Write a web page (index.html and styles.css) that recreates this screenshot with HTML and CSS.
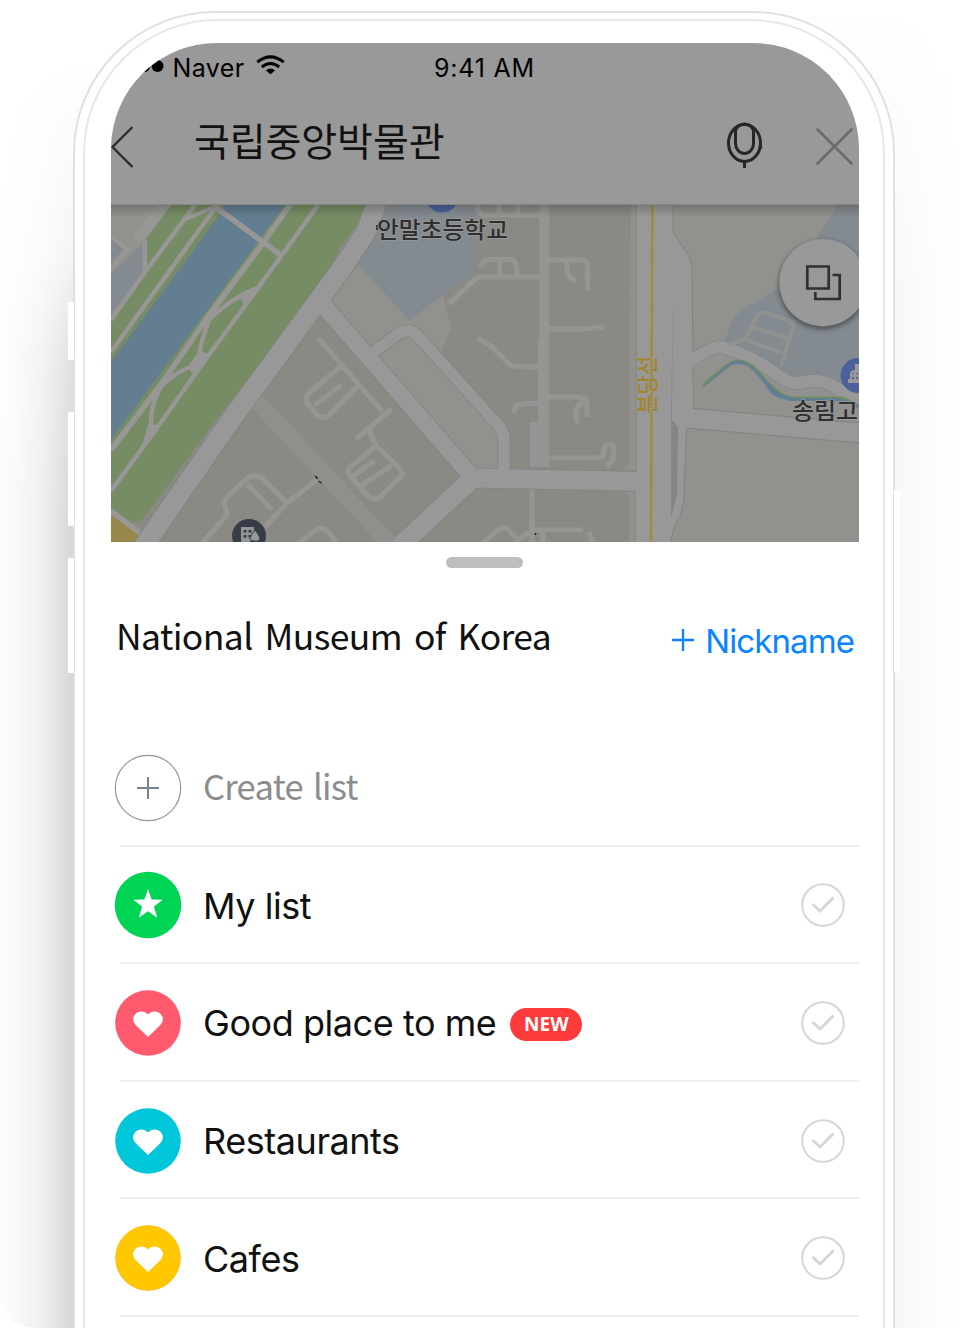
FILE: index.html
```html
<!DOCTYPE html>
<html lang="en">
<head>
<meta charset="utf-8">
<title>Save place</title>
<link rel="stylesheet" href="styles.css">
</head>
<body>
<div class="stage">
<div class="shade shade-left"></div>
<div class="shade shade-right"></div>
<div class="phone">
<i class="key key-mute"></i><i class="key key-up"></i><i class="key key-down"></i><i class="key key-power"></i>
<div class="bezel">
<main class="screen">
  <header class="top">
    <div class="status">
      <svg class="signal" width="30" height="14" viewBox="0 0 30 14"><circle cx="9" cy="7" r="6.200"/><circle cx="22.500" cy="7" r="6"/></svg>
      <span class="carrier">Naver</span>
      <svg class="wifi" width="29" height="20" viewBox="0 0 29 20"><g fill="none" stroke="#000" stroke-width="3"><path d="M1.2 7.2Q14.5-3.4 27.8 7.2"/><path d="M5.8 12Q14.500 5 23.200 12"/></g><path d="M14.500 19.300L10 15.400Q14.500 11.600 19 15.400Z"/></svg>
      <span class="time">9:41 AM</span>
      <svg class="battery" width="14" height="20" viewBox="0 0 14 20"><path d="M1.500 11Q2.500 16 7 16.300" fill="none" stroke="#000" stroke-width="2.200"/></svg>
    </div>
    <div class="search">
      <svg class="back" width="24" height="44" viewBox="0 0 24 44"><path d="M21.500 2L1.500 22L21.500 42" fill="none" stroke="#2a2d35" stroke-width="2.400"/></svg>
      <h1 class="query" lang="ko">국립중앙박물관</h1>
      <svg class="mic" width="37" height="48" viewBox="0 0 37 48"><g fill="none" stroke="#262626" stroke-width="3"><ellipse cx="18.500" cy="21" rx="16" ry="18.500"/><path d="M9.500 10a9 8 0 0 1 18 0v11.500a9 10 0 0 1-18 0z"/><path d="M18.500 39.500v6.500"/></g><circle cx="34.500" cy="25.500" r="1.800" fill="#262626"/></svg>
      <svg class="close" width="37" height="37" viewBox="0 0 37 37"><path d="M1.500 1.500l34 34M35.500 1.500l-34 34" stroke="#6a6b6d" stroke-width="2.700" stroke-linecap="round"/></svg>
    </div>
  </header>
  <svg class="map" width="748" height="337" viewBox="111 205 748 337" lang="ko">
    <defs>
      <linearGradient id="fade" x1="0" y1="0" x2="0" y2="1"><stop offset="0" stop-opacity=".2"/><stop offset="1" stop-opacity="0"/></linearGradient>
      <filter id="soft" x="-30%" y="-30%" width="160%" height="160%"><feGaussianBlur stdDeviation="2.500"/></filter>
    </defs>
    <rect x="111" y="205" width="748" height="337" fill="#8a8984"/>
    <path fill="#91918e" d="M111 205H172L145 240L111 300ZM409 320L443 295L451 328L441 353L504 430V470H473L318 305L357 263ZM631 205H640V542H629V495L624 492H640V470H620L629 464ZM670 205H859V542H670Z"/>
    <path fill="#8f8f8c" d="M256 396L268 400L412 556H390L252 408Z"/>
    <path fill="#848b90" d="M388 205H476V272L409 320L357 263L372 242ZM142 245L111 273V322L145 272ZM111 232L125 248L111 262ZM838 205H859V398L835 384L798 382L765 364L722 346L733 320Q738 311 754 303L779 288L817 238Z"/>
    <path fill="#768c64" d="M171 205L147 238V272L111 322V510L131 523L143 519L216 420L270 350L313 300L340 248L356 226L365 205Z"/>
    <path fill="#637e91" d="M111 362L223 210L225 205H285L111 440Z"/>
    <path fill="#97874a" d="M111 515L148 542H111Z"/>
    <g fill="none" stroke="#989796" stroke-width="4.500" stroke-linejoin="round">
      <path d="M111 320L145 272L195 205M145 240V272M111 352L215 208M185 219L215 207"/>
      <path stroke-width="5.500" d="M213 205L263 242L282 256M290 205L263 243L207 318L162 383L111 450M111 511L149 540"/>
      <path d="M318 205L282 255L247 303L203 363L157 428L111 491M258 288Q232 297 209 320M209 320Q202 338 199 355L190 367Q172 374 160 388M160 388Q151 404 151 422L145 444M111 268L128 250L111 236"/>
      <path stroke-width="11" stroke-linecap="round" d="M166 203L140 236"/>
    </g>
    <path fill="#989796" d="M258 287L241 298L244 307L249 303ZM200 350L189 369L195 377L209 355ZM151 424L145 444L160 426Z"/>
    <g fill="none" stroke="#959594" stroke-width="5.200" stroke-linejoin="round">
      <path d="M477 205Q478 215 486 215H540M499 205V215M518 205V215M480 267Q484 259.500 490 259.500H512Q517 261 517 276M499.500 260V276M540 277H485Q478 276 472 282L449 304"/>
      <path d="M549 260H582Q587 260 587.500 266V290M567 262V270Q569 278 576 281M549 329H582L604 327M478 338L492 347L510 365Q512 367 539 367M514 413Q514 404 522 404L539 403M549 397H580Q587 398 587 405V417M585 401Q571 408 578 423M549 458H598L603 456L605 446Q613 441 614 449L613 460L606 467"/>
      <path d="M532 488V542M532 530H583M484 542L499 529Q505 525 510 532L518 540L533 530M543 530V542M589 532L593 542"/>
      <path d="M318 338L383 412M392 409L356 439M368 428L376 446L350 467Q346 471 350 476L368 496Q375 502 380 497L402 476Q403 472 400 469L376 446M352 477L374 461M362 485L392 465M340 367L308 394Q304 400 308 404L317 415Q323 420 329 415L358 386M315 405L341 385"/>
      <path d="M228 516L224 503Q224 498 248 478Q257 473 263 479L287 503L318 479M287 503L265 527M227 515L203 542M247 484L272 510M300 542L316 530Q322 526 328 532L336 542"/>
    </g>
    <g fill="none" stroke="#828281" stroke-linejoin="round">
      <path stroke-width="21" d="M377 203L366 232L345 264L318 301L233 417L143 547"/>
      <path stroke-width="18" d="M318 299L473 478"/><path stroke-width="20.500" d="M400 546L473 478L600 480.500L640 481.500"/>
      <path stroke-width="13" d="M370 355L398 334Q408 327 416 334L498 425Q504 432 504 440V472"/>
    </g>
    <g fill="none" stroke="#989898" stroke-linejoin="round">
      <path stroke-width="19.500" d="M377 203L366 232L345 264L318 301L233 417L143 547"/>
      <path stroke-width="16.500" d="M318 299L473 478"/><path stroke-width="19" d="M400 546L473 478L600 480.500L640 481.500"/>
      <path stroke-width="11.500" d="M370 355L398 334Q408 327 416 334L498 425Q504 432 504 440V472"/>
    </g>
    <path fill="#959595" d="M539.500 205H549V467H530V422H538V340H539.500Z"/>
    <path fill="none" stroke="#858585" stroke-width="13.500" d="M690 361Q712 346 720 346.500Q748 354 772 371Q790 385 800 383Q818 377 835 387L862 403"/>
    <path fill="#989898" stroke="#828282" stroke-width="1" d="M636 204H673V233L687 253Q691 258 692 270L693.500 408.500L860 423V443L686.500 428L684 495Q683 509 680 516Q672 529 671 543H635V492H632V471.500H636Z"/>
    <path fill="#989898" d="M629 472.200H640V491H629Z"/>
    <path fill="none" stroke="#989898" stroke-width="12" d="M686 364Q712 346 720 346.500Q748 354 772 371Q790 385 800 383Q818 377 835 387L862 403"/>
    <path fill="#858584" d="M673 283L672 420L678 427L677 495L671 518L671 421Z"/>
    <path fill="none" stroke="#91918f" stroke-width="4" stroke-linejoin="round" d="M730 344L745 339L757 316Q760 312 767 313L790 321Q794 323 793 327L781 366M752 327L788 338M747 340L782 353"/>
    <path fill="none" stroke="#718e65" stroke-width="3" d="M703 386Q723 366 736 361Q747 360 757 370Q774 393 790 398H843L859 406"/>
    <path fill="#607f93" d="M701 388Q719 372 731 362Q740 358 748 364Q758 370 775 390Q784 397 796 398H840L859 406V408L840 401L790 401Q773 397 770 392Q756 371 747 366Q738 361 730 366L702 388Z"/>
    <path d="M652.300 205L651 542" stroke="#a48a35" stroke-width="2.400"/>
    <circle cx="442" cy="195.500" r="17" fill="#4b619b"/>
    <path d="M377 225v5M315.500 476l2 3M318.500 481l3 2M535.500 533v2" stroke="#222" stroke-width="1.500"/>
    <circle cx="858" cy="375.500" r="17.500" fill="#4b619b"/><path d="M848 383V379H850V373Q851 370 855 370V364H859V383Z" fill="#999"/><path d="M853 379v-2m0-3v-1m4 6v-2m0-3v-1" stroke="#4b619b" stroke-width="1.800"/>
    <circle cx="249" cy="536" r="17" fill="#363d48"/><path fill="#929496" d="M241 527H254V532L250 542H241Z"/><path fill="#363d48" d="M243.500 530h3v2.500h-3zm5 0h3v2.500h-3zm-5 5h3v2.500h-3zm5 0h3v2.500h-3z"/><path d="M255 530Q259 535 260 538Q259 542 255 541Q250 541 250 538Q251 535 255 530Z" fill="#999" stroke="#363d48"/>
    <g class="label">
      <text x="377" y="238" textLength="131" lengthAdjust="spacingAndGlyphs">안말초등학교</text>
      <text x="792" y="419" textLength="66" lengthAdjust="spacingAndGlyphs">송림고</text>
      <text class="line-name" transform="translate(655 414) rotate(-90)" textLength="58" lengthAdjust="spacingAndGlyphs">분당선</text>
    </g>
    <circle cx="823" cy="285" r="44.500" opacity=".4" filter="url(#soft)"/>
    <circle cx="823" cy="282.700" r="43.700" fill="#999"/>
    <path fill="none" stroke="#303030" stroke-width="2.700" d="M807.300 266.500H828.700V288.500H807.300ZM832.500 275H839.700V299H815.300V292"/>
    <rect x="111" y="205" width="748" height="12" fill="url(#fade)"/>
  </svg>
  <section class="sheet">
    <div class="grip"></div>
    <div class="heading">
      <h2 class="place">National Museum of Korea</h2>
      <a class="nick"><svg width="22" height="22" viewBox="0 0 22 22"><path d="M11 0v22M0 11h22" stroke="#0a84ff" stroke-width="2.300"/></svg><span>Nickname</span></a>
    </div>
    <ul class="lists">
      <li class="row create">
        <svg class="badge" width="68" height="68" viewBox="0 0 68 68"><circle cx="34" cy="34" r="32.700" fill="none" stroke="#8f95a1" stroke-width="1.200"/><path d="M34 23v22M23 34h22" stroke="#748291" stroke-width="2"/></svg>
        <span class="name">Create list</span>
      </li>
      <li class="row">
        <svg class="badge" width="68" height="68" viewBox="0 0 68 68"><circle cx="34" cy="34" r="33.300" fill="#00d455"/><path fill="#fff" d="M34 18L37.600 28.600L48.800 28.800L39.900 35.500L43.200 46.800L34 40.200L24.800 46.800L28.100 35.500L19.200 28.800L30.400 28.600Z"/></svg>
        <span class="name">My list</span>
        <svg class="check" width="44" height="44" viewBox="0 0 44 44"><circle cx="22" cy="22" r="20.800"/><path d="M11.500 21L19 28L32.500 14.500"/></svg>
      </li>
      <li class="row">
        <svg class="badge" width="68" height="68" viewBox="0 0 68 68"><circle cx="34" cy="34" r="32.800" fill="#ff5a6e"/><path class="heart" d="M34 48L22 36.500Q17 31 20.500 26C24 21.500 30.500 21.500 34 25.500C37.500 21.500 44 21.500 47.500 26Q51 31 46 36.500Z"/></svg>
        <span class="name">Good place to me</span><span class="new">NEW</span>
        <svg class="check" width="44" height="44" viewBox="0 0 44 44"><circle cx="22" cy="22" r="20.800"/><path d="M11.500 21L19 28L32.500 14.500"/></svg>
      </li>
      <li class="row">
        <svg class="badge" width="68" height="68" viewBox="0 0 68 68"><circle cx="34" cy="34" r="32.800" fill="#00c6da"/><path class="heart" d="M34 48L22 36.500Q17 31 20.500 26C24 21.500 30.500 21.500 34 25.500C37.500 21.500 44 21.500 47.500 26Q51 31 46 36.500Z"/></svg>
        <span class="name">Restaurants</span>
        <svg class="check" width="44" height="44" viewBox="0 0 44 44"><circle cx="22" cy="22" r="20.800"/><path d="M11.500 21L19 28L32.500 14.500"/></svg>
      </li>
      <li class="row">
        <svg class="badge" width="68" height="68" viewBox="0 0 68 68"><circle cx="34" cy="34" r="32.300" fill="#ffc800" stroke="#ffb90a"/><path class="heart" d="M34 48L22 36.500Q17 31 20.500 26C24 21.500 30.500 21.500 34 25.500C37.500 21.500 44 21.500 47.500 26Q51 31 46 36.500Z"/></svg>
        <span class="name">Cafes</span>
        <svg class="check" width="44" height="44" viewBox="0 0 44 44"><circle cx="22" cy="22" r="20.800"/><path d="M11.500 21L19 28L32.500 14.500"/></svg>
      </li>
    </ul>
  </section>
</main>
</div>
</div>
</div>
</body>
</html>
```
FILE: styles.css
```css
* { box-sizing: border-box; }
body { margin: 0; background: #fff; font-family: Inter, "Noto Sans CJK KR", sans-serif; color: #111; }
svg { display: block; flex: none; }
h1, h2, ul { margin: 0; padding: 0; font-weight: 400; }
.stage { position: relative; height: 1328px; overflow: hidden; padding: 11px 73px 0; }

.shade { position: absolute; top: 0; bottom: 0; }
.shade-left { left: 0; width: 110px; border-bottom-left-radius: 32px; background: linear-gradient(90deg, #fdfdfd 0, #f9f9f9 18px, #eeefef 42px, #e0e2e1 60px, #d3d6d5 73px); -webkit-mask-image: linear-gradient(transparent 60px, rgba(0,0,0,.25) 250px, rgba(0,0,0,.75) 360px, #000 520px); mask-image: linear-gradient(transparent 60px, rgba(0,0,0,.25) 250px, rgba(0,0,0,.75) 360px, #000 520px); }
.shade-right { right: 0; width: 160px; background: linear-gradient(270deg, #fff 5px, #fcfcfc 40px, #f7f7f7 73px); -webkit-mask-image: linear-gradient(transparent, #000 300px); mask-image: linear-gradient(transparent, #000 300px); }

.phone { position: relative; width: 822px; height: 1500px; padding: 6px 8px; border: 2px solid #dfdfe7; border-radius: 142px 142px 0 0; background: #fff; }
.bezel { height: 1500px; padding: 22px 26px; border: 2px solid #e6e6ed; border-radius: 134px 134px 0 0; }
.key { position: absolute; width: 6px; background: #fff; border-radius: 1px; }
.key-mute { left: -7px; top: 289px; height: 58px; }
.key-up { left: -7px; top: 399px; height: 114px; }
.key-down { left: -7px; top: 545px; height: 115px; }
.key-power { right: -7px; top: 477px; height: 183px; }

.screen { width: 748px; height: 1400px; overflow: hidden; border-radius: 106px 106px 0 0; background: #fff; }
.top { height: 162px; background: #999; border-bottom: 1px solid #858585; }
.status { display: flex; height: 48px; padding-left: 24px; align-items: center; font-size: 25px; line-height: 50px; color: #000; }
.signal { margin-top: -3px; }
.carrier { width: 72px; margin: 2px 0 0 7.500px; letter-spacing: .4px; white-space: nowrap; }
.wifi { margin: -4px 0 0 11.500px; }
.time { width: 102px; margin: 2px 0 0 149px; letter-spacing: .8px; white-space: nowrap; }
.battery { margin: 5px 0 0 291px; }
.search { display: flex; align-items: flex-start; padding-top: 34px; }
.query { width: 254px; margin: -16px 0 0 59px; font: 400 39px/60px "Noto Sans CJK KR", sans-serif; letter-spacing: -.1px; white-space: nowrap; }
.mic { margin: -3px 0 0 278px; }
.close { margin: 3px 0 0 53px; }
.label { font: 500 23px "Noto Sans CJK KR", sans-serif; fill: #2f2f2f; stroke: #999; stroke-width: 1.5px; paint-order: stroke; }
.line-name { font-size: 22px; fill: #a3842b; }

.sheet { padding: 15px 0 0 4px; }
.grip { width: 77px; height: 11px; margin-left: 331px; border-radius: 6px; background: #bebebe; }
.heading { display: flex; height: 161px; padding: 37px 5px 0 1px; justify-content: space-between; }
.place { font: 400 35.500px/60px "Noto Sans CJK KR", sans-serif; letter-spacing: -.6px; word-spacing: 4.500px; white-space: nowrap; }
.nick { display: flex; gap: 11px; align-items: center; height: 71px; font-size: 33px; letter-spacing: -.9px; color: #0a84ff; white-space: nowrap; }
.nick svg { margin-top: -2px; }
.lists { list-style: none; }
.row { position: relative; display: flex; align-items: center; height: 117.600px; padding-right: 14px; }
.row::after { content: ""; position: absolute; left: 5px; right: 0; bottom: 0; height: 2px; background: #efefef; }
.badge { margin: 0 0 0 -1px; }
.create .badge { margin-top: 1px; }
.name { margin: 1px 0 0 21px; font-size: 36px; letter-spacing: -.45px; white-space: nowrap; }
.create .name { margin-top: -5px; font-family: "Noto Sans CJK KR", sans-serif; font-size: 34.500px; letter-spacing: -.7px; word-spacing: 3px; color: #8c8c8c; }
.new { width: 72px; height: 33px; margin: 4px 0 0 14px; border-radius: 17px; background: #ff3a3a; color: #fff; font: 700 19px/33px "Open Sans", sans-serif; text-align: center; }
.check { margin: 0 0 0 auto; fill: none; stroke: #d6d6d6; stroke-width: 2; }
.check path { stroke-width: 3; }
.heart { fill: #fff; }
```
